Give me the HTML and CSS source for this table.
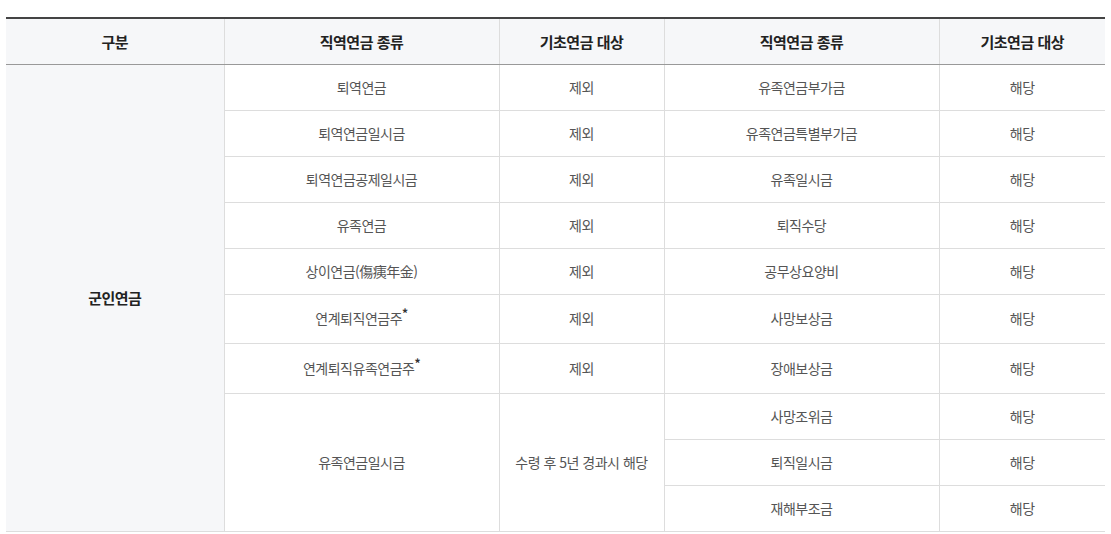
FILE: index.html
```html
<!DOCTYPE html>
<html lang="ko">
<head>
<meta charset="utf-8">
<link rel="stylesheet" href="styles.css">
</head>
<body>
<table class="tbl">
  <colgroup>
    <col class="w-cat"><col class="w-type"><col class="w-tgt"><col class="w-type"><col class="w-tgt2">
  </colgroup>
  <thead>
    <tr>
      <th>구분</th>
      <th>직역연금 종류</th>
      <th>기초연금 대상</th>
      <th>직역연금 종류</th>
      <th>기초연금 대상</th>
    </tr>
  </thead>
  <tbody>
    <tr>
      <td rowspan="10" class="cat">군인연금</td>
      <td>퇴역연금</td><td>제외</td><td>유족연금부가금</td><td>해당</td>
    </tr>
    <tr><td>퇴역연금일시금</td><td>제외</td><td>유족연금특별부가금</td><td>해당</td></tr>
    <tr><td>퇴역연금공제일시금</td><td>제외</td><td>유족일시금</td><td>해당</td></tr>
    <tr><td>유족연금</td><td>제외</td><td>퇴직수당</td><td>해당</td></tr>
    <tr><td>상이연금(傷痍年金)</td><td>제외</td><td>공무상요양비</td><td>해당</td></tr>
    <tr class="sup-row"><td>연계퇴직연금주<sup>*</sup></td><td>제외</td><td>사망보상금</td><td>해당</td></tr>
    <tr class="sup-row2"><td>연계퇴직유족연금주<sup>*</sup></td><td>제외</td><td>장애보상금</td><td>해당</td></tr>
    <tr>
      <td rowspan="3">유족연금일시금</td>
      <td rowspan="3">수령 후 5년 경과시 해당</td>
      <td>사망조위금</td><td>해당</td>
    </tr>
    <tr><td>퇴직일시금</td><td>해당</td></tr>
    <tr><td>재해부조금</td><td>해당</td></tr>
  </tbody>
</table>
</body>
</html>
```

FILE: styles.css
```css
html, body {
  margin: 0;
  padding: 0;
  background: #fff;
}
body {
  padding: 17px 6px 0 6px;
  font-family: "Noto Sans CJK KR", "Noto Sans", sans-serif;
}
.tbl {
  width: 1099px;
  border-collapse: collapse;
  table-layout: fixed;
  border-top: 2px solid #444;
}
.w-cat { width: 218px; }
.w-type { width: 275px; }
.w-tgt { width: 165px; }
.w-tgt2 { width: 166px; }
.tbl th {
  background: #f6f7f9;
  color: #222;
  font-size: 15px;
  font-weight: 700;
  height: 46px;
  padding: 0 8px;
  box-sizing: border-box;
  border-left: 1px solid #ddd;
  border-bottom: 1px solid #999;
  letter-spacing: -0.5px;
}
.tbl td {
  color: #555;
  font-size: 14px;
  line-height: 21px;
  height: 46px;
  box-sizing: border-box;
  padding: 12px 8px;
  text-align: center;
  border-left: 1px solid #ddd;
  border-bottom: 1px solid #ddd;
  letter-spacing: -0.5px;
}
.tbl th:first-child { border-left: none; }
.tbl td.cat {
  border-left: none;
  background: #f6f7f9;
  color: #222;
  font-size: 15px;
  font-weight: 700;
}
.tbl tr.sup-row td {
  height: 49px;
}
.tbl tr.sup-row2 td {
  height: 50px;
}
.tbl sup {
  font-size: 12px;
  font-weight: 700;
  color: #333;
  line-height: 0;
  vertical-align: 6px;
}
```
